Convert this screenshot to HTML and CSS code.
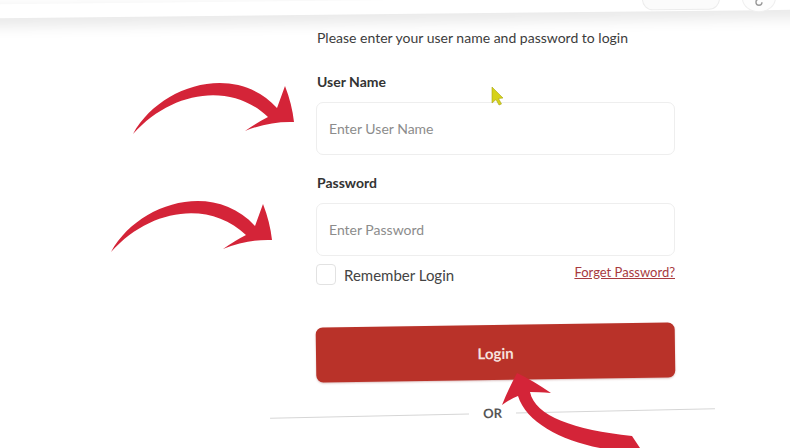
FILE: index.html
```html
<!DOCTYPE html>
<html lang="en">
<head>
<meta charset="utf-8">
<title>Login</title>
<link rel="stylesheet" href="styles.css">
</head>
<body>
<header class="topbar">
  <div class="topbar-pill"><span class="dot"></span><span class="dot"></span><span class="dot"></span></div>
  <div class="topbar-circle">
    <svg class="glyph" width="10" height="10" viewBox="0 0 10 10" xmlns="http://www.w3.org/2000/svg"><path d="M8 5 A3 3 0 1 1 5 2" fill="none" stroke="#9a9a9a" stroke-width="1.4"/></svg>
  </div>
</header>
<main class="login">
  <p class="intro">Please enter your user name and password to login</p>
  <label class="field-label" for="user">User Name</label>
  <div class="input-box"><input id="user" class="input" type="text" placeholder="Enter User Name"></div>
  <label class="field-label pw" for="pass">Password</label>
  <div class="input-box"><input id="pass" class="input" type="password" placeholder="Enter Password"></div>
  <div class="options">
    <label class="remember"><span class="checkbox"></span>Remember Login</label>
    <a class="forgot" href="#">Forget Password?</a>
  </div>
  <button class="login-btn" type="button">Login</button>
  <div class="or-row"><span class="line"></span><span class="or">OR</span><span class="line"></span></div>
</main>
<svg class="overlay" width="790" height="448" viewBox="0 0 790 448" xmlns="http://www.w3.org/2000/svg">
  <path class="arrow" d="M133,134 C160,85 235,62 277,108 L285,86 Q292,104 294,122 Q270,121 245,131 Q258,122 268,117 C232,82 172,90 133,134 Z"/>
  <path class="arrow" transform="translate(-22,118)" d="M133,134 C160,85 235,62 277,108 L285,86 Q292,104 294,122 Q270,121 245,131 Q258,122 268,117 C232,82 172,90 133,134 Z"/>
  <path class="arrow" d="M517,373 Q532,380 551,393 Q538,392 530,392 C535,416 574,430 632,436 L640,448 L600,448 C560,440 526,422 518,396 Q510,399 502,405 Q508,390 517,373 Z"/>
  <polygon class="cursor" points="492,87 503,98 498.5,98.5 501.5,104 499,105 496,99.5 492,103"/>
</svg>
</body>
</html>
```
FILE: styles.css
```css
* { box-sizing: border-box; }
html, body { margin: 0; padding: 0; }
body {
  width: 790px;
  height: 448px;
  overflow: hidden;
  background: #ffffff;
  font-family: Lato, "Open Sans", "Liberation Sans", sans-serif;
  color: #3a3a3a;
  position: relative;
}
.topbar {
  height: 14px;
  width: 830px;
  margin-left: -20px;
  background: #ffffff;
  box-shadow: 0 6px 16px rgba(0, 0, 0, 0.12);
  transform: rotate(-0.6deg);
  display: flex;
  justify-content: flex-end;
  align-items: flex-end;
  gap: 22px;
  padding-right: 34px;
  position: relative;
  z-index: 1;
}
.topbar-pill {
  width: 78px;
  height: 24px;
  margin-bottom: 1px;
  border: 1px solid #ececec;
  border-radius: 11px;
  background: #fbfbfb;
  display: flex;
  justify-content: center;
  align-items: flex-start;
  gap: 3px;
  padding-top: 10px;
}
.dot { width: 2px; height: 2px; border-radius: 50%; background: #c4c4c4; }
.topbar-circle {
  width: 34px;
  height: 28px;
  margin-bottom: -2px;
  border: 1px solid #efefef;
  border-radius: 50%;
  background: #fdfdfd;
  display: flex;
  justify-content: center;
  align-items: flex-start;
  padding-top: 12px;
}
.glyph { display: block; }

.login {
  width: 359px;
  margin-left: 316px;
  display: flex;
  flex-direction: column;
}
.intro {
  margin: 15px 0 0 1px;
  font-size: 14px;
  line-height: 18px;
  color: #3c3c3c;
}
.field-label {
  margin: 26px 0 11px 1px;
  font-size: 14px;
  line-height: 18px;
  font-weight: 700;
  color: #333333;
}
.field-label.pw { margin-top: 19px; }
.input-box {
  height: 53px;
  border: 1px solid #eeeeee;
  border-radius: 7px;
  background: #ffffff;
  display: flex;
  align-items: center;
  padding: 0 12px;
}
.input {
  border: none;
  outline: none;
  width: 100%;
  font-family: inherit;
  font-size: 14px;
  color: #333;
  background: transparent;
  padding: 0;
}
.input::placeholder { color: #8c8c8c; }
.options {
  margin-top: 8px;
  height: 21px;
  display: flex;
  justify-content: space-between;
  align-items: center;
}
.remember {
  display: flex;
  align-items: center;
  gap: 8px;
  font-size: 15px;
  line-height: 18px;
  color: #444444;
}
.checkbox {
  width: 20px;
  height: 21px;
  border: 1px solid #e2e2e2;
  border-radius: 4px;
  background: #fff;
}
.forgot {
  font-size: 13px;
  line-height: 16px;
  margin-top: -6px;
  color: #a83a3e;
  text-decoration: underline;
}
.login-btn {
  margin-top: 40px;
  height: 55px;
  border: none;
  border-radius: 7px;
  background: #b93229;
  color: #f6e2df;
  font-family: inherit;
  font-size: 15px;
  font-weight: 700;
  box-shadow: 0 1px 2px rgba(120, 20, 20, 0.25);
  transform: rotate(-0.8deg);
}
.or-row {
  margin: 25px -40px 0 -46px;
  display: flex;
  align-items: center;
  gap: 14px;
  transform: rotate(-1.2deg);
}
.line { flex: 1; height: 1px; background: #d6d6d6; }
.or { font-size: 13px; font-weight: 700; color: #555; line-height: 16px; }

.overlay {
  position: absolute;
  top: 0;
  left: 0;
  pointer-events: none;
  z-index: 2;
}
.arrow { fill: #d42438; }
.cursor { fill: #d6d21a; stroke: #a8a412; stroke-width: 0.6; }
```
